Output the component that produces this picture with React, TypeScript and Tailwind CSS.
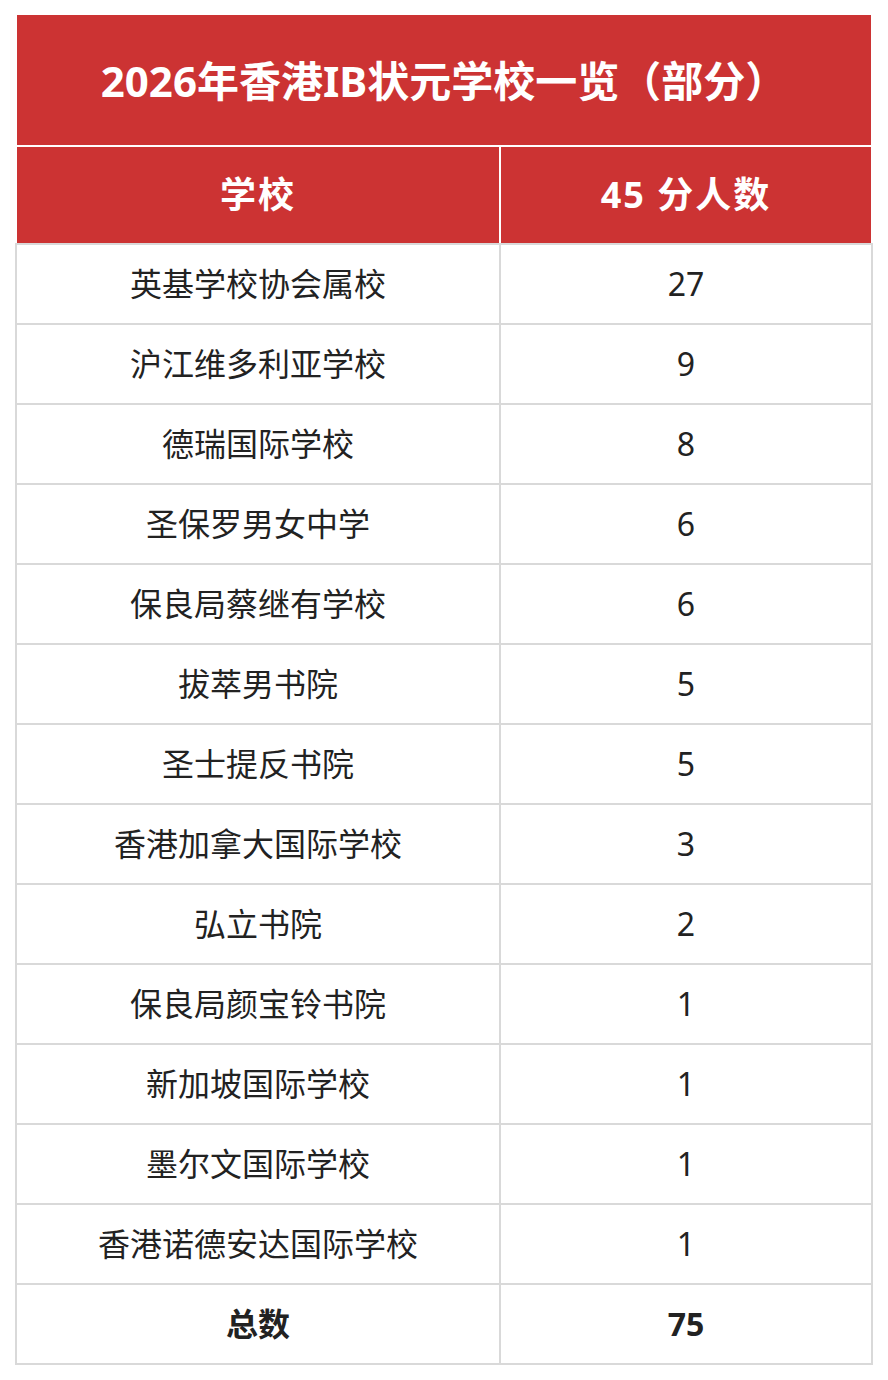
const rows: [string, string][] = [
  ['英基学校协会属校', '27'],
  ['沪江维多利亚学校', '9'],
  ['德瑞国际学校', '8'],
  ['圣保罗男女中学', '6'],
  ['保良局蔡继有学校', '6'],
  ['拔萃男书院', '5'],
  ['圣士提反书院', '5'],
  ['香港加拿大国际学校', '3'],
  ['弘立书院', '2'],
  ['保良局颜宝铃书院', '1'],
  ['新加坡国际学校', '1'],
  ['墨尔文国际学校', '1'],
  ['香港诺德安达国际学校', '1'],
];

function Row({ school, count, bold, first }: { school: string; count: string; bold?: boolean; first?: boolean }) {
  return (
    <div
      className={`flex h-[80px] border-x-2 border-b-2 border-[#d9d9d9] ${first ? 'h-[82px] border-t-2' : ''} ${
        bold ? 'font-bold' : ''
      }`}
    >
      <div className="flex w-[484px] items-center justify-center border-r-2 border-[#d9d9d9]">{school}</div>
      <div className="flex flex-1 items-center justify-center">{count}</div>
    </div>
  );
}

export default function App() {
  return (
    <div
      className="min-h-[1380px] bg-white pt-[13px] pl-[15px] text-[#222222]"
      style={{ fontFamily: '"Noto Sans", "Noto Sans CJK SC", sans-serif' }}
    >
      <div className="w-[858px]">
        <div className="flex h-[134px] items-center justify-center border-2 border-white bg-[#cc3333] text-[42px] font-bold text-white">
          2026年香港IB状元学校一览（部分）
        </div>
        <div className="flex h-[96px] border-x-2 border-white bg-[#cc3333] text-[36px] font-bold tracking-[2px] text-white">
          <div className="flex w-[484px] items-center justify-center border-r-2 border-white">学校</div>
          <div className="flex flex-1 items-center justify-center">45 分人数</div>
        </div>
        <div className="text-[32px]">
          {rows.map(([s, c], i) => (
            <Row key={s} school={s} count={c} first={i === 0} />
          ))}
          <Row school="总数" count="75" bold />
        </div>
      </div>
    </div>
  );
}
